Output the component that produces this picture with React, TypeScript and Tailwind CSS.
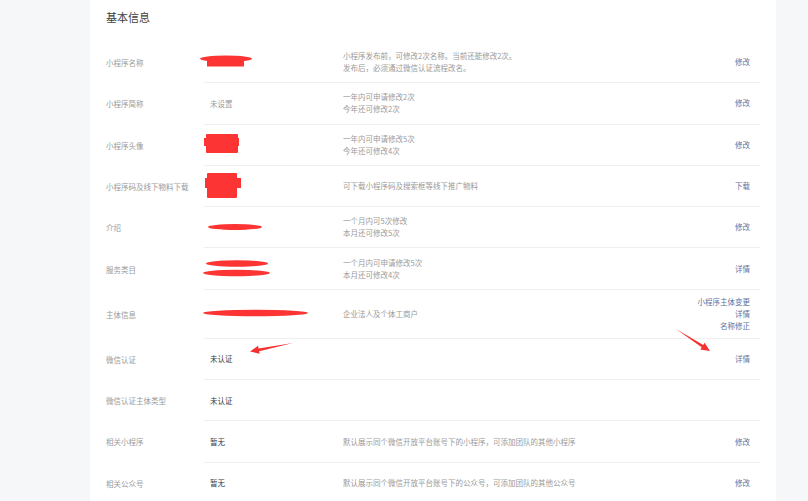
import React from "react";

type Row = {
  label: string;
  value?: string;
  valueTone?: "dark" | "light";
  desc?: string[];
  actions?: string[];
  tall?: boolean;
};

const rows: Row[] = [
  { label: "小程序名称", desc: ["小程序发布前，可修改2次名称。当前还能修改2次。", "发布后，必须通过微信认证流程改名。"], actions: ["修改"] },
  { label: "小程序简称", value: "未设置", valueTone: "light", desc: ["一年内可申请修改2次", "今年还可修改2次"], actions: ["修改"] },
  { label: "小程序头像", desc: ["一年内可申请修改5次", "今年还可修改4次"], actions: ["修改"] },
  { label: "小程序码及线下物料下载", desc: ["可下载小程序码及搜索框等线下推广物料"], actions: ["下载"] },
  { label: "介绍", desc: ["一个月内可5次修改", "本月还可修改5次"], actions: ["修改"] },
  { label: "服务类目", desc: ["一个月内可申请修改5次", "本月还可修改4次"], actions: ["详情"] },
  { label: "主体信息", desc: ["企业法人及个体工商户"], actions: ["小程序主体变更", "详情", "名称修正"], tall: true },
  { label: "微信认证", value: "未认证", valueTone: "dark", actions: ["详情"] },
  { label: "微信认证主体类型", value: "未认证", valueTone: "dark" },
  { label: "相关小程序", value: "暂无", valueTone: "dark", desc: ["默认展示同个微信开放平台账号下的小程序，可添加团队的其他小程序"], actions: ["修改"] },
  { label: "相关公众号", value: "暂无", valueTone: "dark", desc: ["默认展示同个微信开放平台账号下的公众号，可添加团队的其他公众号"], actions: ["修改"] },
];

function Arrow({ x1, y1, x2, y2 }: { x1: number; y1: number; x2: number; y2: number }) {
  const dx = x2 - x1;
  const dy = y2 - y1;
  const len = Math.hypot(dx, dy);
  const ux = dx / len;
  const uy = dy / len;
  const nx = -uy;
  const ny = ux;
  const headLen = 9;
  const headW = 4;
  const bx = x2 - ux * headLen;
  const by = y2 - uy * headLen;
  const shaftW = 1.4;
  const pts = [
    [x1, y1],
    [bx + nx * shaftW, by + ny * shaftW],
    [bx + nx * headW, by + ny * headW],
    [x2, y2],
    [bx - nx * headW, by - ny * headW],
    [bx - nx * shaftW, by - ny * shaftW],
  ]
    .map((p) => p.join(","))
    .join(" ");
  return <polygon points={pts} fill="#f5312f" />;
}

export default function App() {
  return (
    <div
      className="relative min-h-[501px] w-full bg-[#f6f7f9]"
      style={{ fontFamily: '"Noto Sans CJK SC", "Noto Sans", sans-serif' }}
    >
      <div className="ml-[90px] min-h-[501px] w-[686px] bg-white px-4">
        <div className="flex h-[42px] items-start pt-[9px] text-[11px] leading-4 text-[#404040]">基本信息</div>
        {rows.map((r, i) => (
          <div key={i} className={`flex ${r.tall ? "h-[49px]" : "h-[41.3px]"}`}>
            <div className="flex w-[98px] shrink-0 items-center text-[7.5px] text-[#9a9a9a]">{r.label}</div>
            <div className="flex flex-1 items-center border-b border-[#efefef]">
              <div
                className={`w-[139px] shrink-0 pl-[6px] text-[7.5px] ${
                  r.valueTone === "dark" ? "text-[#3a3a3a]" : "text-[#9a9a9a]"
                }`}
              >
                {r.value ?? ""}
              </div>
              <div className="flex flex-1 flex-col text-[7.5px] leading-[12px] text-[#9a9a9a]">
                {(r.desc ?? []).map((d, j) => (
                  <span key={j}>{d}</span>
                ))}
              </div>
              <div className="flex flex-col items-end pr-[10px] text-[7.5px] leading-[12px] text-[#5f71a0]">
                {(r.actions ?? []).map((a, j) => (
                  <span key={j}>{a}</span>
                ))}
              </div>
            </div>
          </div>
        ))}
      </div>

      <svg
        className="pointer-events-none absolute left-0 top-0"
        width="808"
        height="501"
        viewBox="0 0 808 501"
      >
        <g fill="#fd3434">
          <ellipse cx="226" cy="58.7" rx="26" ry="3.2" />
          <rect x="207" y="57" width="37" height="9.5" />
          <rect x="206" y="134" width="32" height="19" rx="1" />
          <rect x="204" y="138" width="35" height="8" />
          <rect x="207" y="173" width="30" height="25" rx="1" />
          <rect x="205" y="178" width="36" height="10" />
          <ellipse cx="235" cy="227" rx="27" ry="3" />
          <ellipse cx="237" cy="263.5" rx="31" ry="3.3" />
          <ellipse cx="236.5" cy="273" rx="33.5" ry="3.2" />
          <ellipse cx="255.5" cy="313" rx="52.5" ry="3.2" />
        </g>
        <Arrow x1={293} y1={343} x2={250} y2={351.5} />
        <Arrow x1={676} y1={329} x2={710} y2={351} />
      </svg>
    </div>
  );
}
